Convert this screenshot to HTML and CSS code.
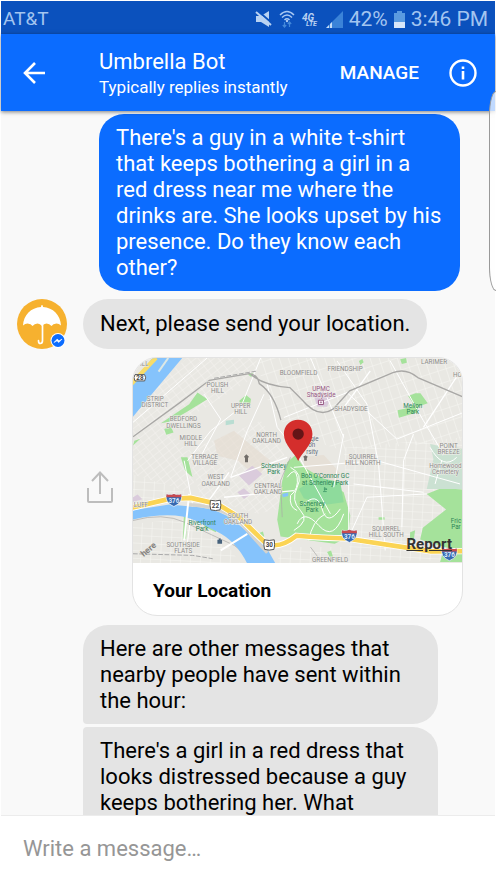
FILE: index.html
```html
<!DOCTYPE html>
<html lang="en">
<head>
<meta charset="utf-8">
<meta name="viewport" content="width=device-width, initial-scale=1">
<title>Umbrella Bot</title>
<link rel="stylesheet" href="styles.css">
</head>
<body>
<div class="screen">
  <div class="status-bar">
    <span>AT&amp;T</span>
    <div class="status-icons">
      <svg width="18" height="18" viewBox="0 0 18 18" aria-hidden="true">
        <path d="M1 6h5l8-5v16l-8-5H1z" fill="#b9d2f2"/>
        <path d="M3 1l15 13" stroke="#0b51bd" stroke-width="2"/>
        <path d="M1 2l15 13" stroke="#b9d2f2" stroke-width="2"/>
      </svg>
      <svg width="16" height="18" viewBox="0 0 16 18" fill="none" aria-hidden="true">
        <path d="M1 5q7-7 14 0M3 7.500q5-5 10 0M5.500 10q2.500-2.500 5 0" stroke="#a9c8f2" stroke-width="1.500"/>
        <circle cx="8" cy="11" r="1.200" fill="#a9c8f2"/>
        <path d="M5.500 12v5M3.800 15l1.700 2 1.700-2M10.500 17v-5M8.800 14l1.700-2 1.700 2" stroke="#4388da" stroke-width="1.200"/>
      </svg>
      <svg width="19" height="18" viewBox="0 0 19 18" aria-hidden="true">
        <text x="1" y="11" class="lte-big">4G</text>
        <text x="5" y="16" class="lte-small">LTE</text>
      </svg>
      <svg width="17" height="17" viewBox="0 0 17 17" aria-hidden="true">
        <path d="M17 0v17H0z" fill="#3b83d8"/>
        <path d="M6 11v6H4v-4zM3 14v3H0z" fill="#c4dbf7"/>
      </svg>
      <span>42%</span>
      <svg class="battery" width="11" height="17" viewBox="0 0 11 17" aria-hidden="true">
        <path d="M3 0h5v2h3v15H0V2h3z" fill="#5b9be0"/>
        <path d="M0 11h11v6H0z" fill="#d9e7f9"/>
      </svg>
      <span>3:46 PM</span>
    </div>
  </div>

  <header class="app-bar">
    <button class="icon-button" type="button" aria-label="Back">
      <svg width="24" height="24" viewBox="0 0 24 24" fill="none" stroke="#fff" stroke-width="2.600" aria-hidden="true">
        <path d="M23 12H3M13 2L3 12l10 10"/>
      </svg>
    </button>
    <div class="contact">
      <h1>Umbrella Bot</h1>
      <p>Typically replies instantly</p>
    </div>
    <button class="manage" type="button">MANAGE</button>
    <button class="icon-button" type="button" aria-label="Information">
      <svg width="28" height="28" viewBox="0 0 28 28" aria-hidden="true">
        <circle cx="14" cy="14" r="12.500" fill="none" stroke="#fff" stroke-width="2.400"/>
        <path d="M12.700 7.500h2.600v2.600h-2.600zM12.700 12h2.600v8.500h-2.600z" fill="#fff"/>
      </svg>
    </button>
  </header>

  <main class="chat">
    <p class="bubble sent">There's a guy in a white t-shirt that keeps bothering a girl in a red dress near me where the drinks are. She looks upset by his presence. Do they know each other?</p>

    <div class="received-row">
      <svg class="avatar" width="50" height="50" viewBox="0 0 50 50" role="img" aria-label="Umbrella Bot">
        <circle cx="25" cy="25" r="25" fill="#f6b12f"/>
        <path d="M25 6q1 0 1 2C36 8.500 43.500 16 44 26.500q-2-2-4.500-2-3.500 0-5 2.500-2-2.500-5-2.500-2.500 0-4.500 2.500-2-2.500-4.500-2.500-3 0-5 2.500-1.500-2.500-5-2.500-2.500 0-4.500 2C6.500 16 14 8.500 24 8q0-2 1-2z" fill="#fff"/>
        <path d="M25.500 26v15.500q0 3-2.200 3-1.800 0-1.800-2.800" fill="none" stroke="#fff" stroke-width="1.700" stroke-linecap="round"/>
        <circle cx="41" cy="41.500" r="7.500" fill="#fff"/>
        <circle cx="41" cy="41.500" r="6.500" fill="#0b6cff"/>
        <path d="M37 43.500l3.200-3.400 1.800 1.700 3-1.700-3.200 3.400-1.800-1.700z" fill="#fff" stroke="#fff" stroke-width=".6"/>
      </svg>
      <p class="bubble received">Next, please send your location.</p>
    </div>

    <div class="location-row">
      <button class="icon-button share" type="button" aria-label="Share">
        <svg width="28" height="34" viewBox="0 0 28 34" fill="none" stroke="#bdbdbd" stroke-width="2" aria-hidden="true">
          <path d="M14 24V3M6 11l8-8.500 8 8.500M2 18v13q0 1 1 1h22q1 0 1-1V18"/>
        </svg>
      </button>
      <article class="location-card">
        <div class="map">
        <svg class="map-art" viewBox="6 21 990 618" role="img" aria-label="Map of Oakland and Shadyside">
          <defs>
            <pattern id="grid-a" width="24" height="17" patternUnits="userSpaceOnUse" patternTransform="rotate(-38)">
              <path d="M0 0h24M0 0v17" stroke="#f8f7f4" stroke-width="2.400" fill="none"/>
            </pattern>
            <pattern id="grid-b" width="26" height="38" patternUnits="userSpaceOnUse" patternTransform="rotate(-18)">
              <path d="M0 0h26M0 0v38" stroke="#f8f7f4" stroke-width="3" fill="none"/>
            </pattern>
            <pattern id="grid-c" width="30" height="23" patternUnits="userSpaceOnUse" patternTransform="rotate(3)">
              <path d="M0 0h30M0 0v23" stroke="#f8f7f4" stroke-width="3" fill="none"/>
            </pattern>
            <g id="interstate">
              <path d="M-22-17q12 4 22-1 10 5 22 1 7 25-22 37-29-12-22-37z" fill="#3769b0" stroke="#fff" stroke-width="2"/>
              <path d="M-22-17q12 4 22-1 10 5 22 1l1 9h-46z" fill="#c84b50"/>
              <text y="9" class="shield">376</text>
            </g>
          </defs>
          <path d="M0 0h1010v660H0z" fill="#e9e8e3"/>
          <path d="M0 170L170 20h210l-10 60-130 80L110 240 0 330z" fill="url(#grid-a)"/>
          <path d="M380 20h620v250L640 300 480 250 400 130z" fill="url(#grid-b)"/>
          <path d="M640 290l360-30v370H660z" fill="url(#grid-c)"/>
          <path d="M0 370l160 50v25L0 460zM0 520l230-20 100 140H0zM460 590h200v60H430z" fill="url(#grid-c)"/>
          <path d="M170 300l220-90 70 90 10 170-90 20-170-50zM0 330l110-90 60 60 20 100-30 20-160-50z" fill="url(#grid-a)"/>
          <path d="M250 270l60-30 60 50-30 45-80-20zM310 320l60-30 50 40-40 50zM520 318l60-5 50 55-20 45-90-20z" fill="#e4dace" fill-opacity=".6"/>
          <path d="M325 375l40-30 30 25-40 35zM320 425l20-12 20 18-20 14zM552 140l30-22 18 24-10 26h-30zM6 440l14-8 14 14-28 8z" fill="#dacbdc"/>

          <g fill="#a5e29b">
            <path d="M175 160l25-35 30 20-65 40-50 28-25 4zM326 150l20-18 15 12-3 20-30-5zM352 71l15-5-5 12zM100 235l20-8 8 18-22 7zM150 320h20l15 60-22-20zM10 270l18-6-22 20zM686 30l10-6 4 10-10 8zM810 25l18-4 2 14-15 4zM834 135l22-8 15 0 22 30-28 10-5 18-54 16-4-23 36-8 12-10z"/>
            <path d="M455 390l15-55 25-22 25 37 85 50 35 25 20 70-7 65-40 20-163-22-10-50z"/>
            <path d="M890 430l45-18 65 5v190l-130-40 8-35 70-55z"/>
            <path d="M745 500h18v8h-18zM840 545l15-6-4 28-12 5zM590 605l12-5 6 20h-10zM160 480l9 0-3 85h-10zM380 550l17-7 4 15-14 4zM940 600l60 5v30h-70zM225 515l35 18-5 12-36-18z"/>
          </g>
          <path d="M505 415l55-35 70 15 10 60-60 8-60-20z" fill="#8edb9c"/>
          <path d="M900 280l25 5 12 30 45-25 18 5v120H890l20-90z" fill="#cbe1d2"/>
          <path d="M285 210l25-3v12l-25 4z" fill="#b9ddd2"/>
          <g fill="none" stroke="#fff" stroke-width="3">
            <path d="M470 380q25-35 30 0t-20 55q-5 35 20 45M515 465q45-45 60 10t55 0M500 520q20-45 65 5t75-35M535 570q10-60 50-80M480 350q40 20 20 60t10 70-20 60M655 390v150M900 290q40 70 80 30M915 400l20-70M0 220L230 20M390 21L330 170 240 240 170 330M410 100l30 130 50 60 110 200M400 130L350 240 300 380M220 130l50 75-75 140M460 200l190-75 150 140 200-80M540 20l100 240M620 30l90 130 35 180 20 260M780 30l100 180 60 100M160 330l25 130-15 115M490 350l250-20 250 70M670 400l210 25M660 550l50-110 180-10M850 250l-30 80-5 200M640 250l-30 160"/>
            <path d="M880 230L998 50M720 60L640 170M300 380l170-60M280 440l210-20M220 470l75-105" stroke-width="4"/>
          </g>
          <g fill="none" stroke="#a9a8a6" stroke-width="4">
            <path d="M6 258l140-102 90-68 120-20q25 3 30 30 45 30 65 110M360 70q40 35 118 40l35 35q50 60 95 30l50-55 130-55q40-15 75 15l140 60"/>
            <path d="M6 510q90-25 155 5l150 70 70 55M570 630l-30-40M455 500l-5-110 30-70" stroke-width="2"/>
          </g>
          <path d="M250 82l130-22M6 610l180 5 60 10" fill="none" stroke="#aaa" stroke-width="3" stroke-dasharray="14 5"/>

          <path d="M0 105l65-85h90L75 115 0 205z" fill="#85c3fc"/>
          <path d="M83 62L112 21" stroke="#dce8e5" stroke-width="6"/>
          <path d="M0 100L75 20" stroke="#f8dc68" stroke-width="13"/>
          <path d="M0 480l115-18 90 8q60 7 100 37l100 80 30 53h-85q-35-70-92-97l-65-33q-65-30-193-2z" fill="#85c3fc"/>
          <path d="M175 462q90 5 145 45l90 100" fill="none" stroke="#d5d3cd" stroke-width="10"/>
          <path d="M175 430l-15 140M350 550l-80 50" stroke="#fff" stroke-width="6"/>
          <path d="M0 472l115-27 65-3 80 18 65 40 80 78q40 20 93-22 80 6 150 8l255 39 95-1" fill="none" stroke="#fff" stroke-width="19"/>
          <path d="M0 472l115-27 65-3 80 18 65 40 80 78q40 20 93-22 80 6 150 8l255 39 95-1" fill="none" stroke="#fbd454" stroke-width="14"/>
          <path d="M455 430l18-4v10l-16 4z" fill="#85c3fc"/>

          <g class="place">
            <text x="40" y="46">ILL</text>
            <text x="73" y="149">STRIP</text><text x="72" y="168">DISTRICT</text>
            <text x="260" y="108">POLISH</text><text x="260" y="125">HILL</text>
            <text x="330" y="171">UPPER</text><text x="330" y="189">HILL</text>
            <text x="158" y="212">BEDFORD</text><text x="158" y="232">DWELLINGS</text>
            <text x="180" y="267">MIDDLE</text><text x="180" y="285">HILL</text>
            <text x="222" y="324">TERRACE</text><text x="222" y="342">VILLAGE</text>
            <text x="408" y="259">NORTH</text><text x="408" y="276">OAKLAND</text>
            <text x="255" y="386">WEST</text><text x="255" y="405">OAKLAND</text>
            <text x="412" y="413">CENTRAL</text><text x="412" y="431">OAKLAND</text>
            <text x="322" y="503">SOUTH</text><text x="322" y="521">OAKLAND</text>
            <text x="157" y="590">SOUTHSIDE</text><text x="157" y="608">FLATS</text>
            <text x="30" y="470">LUFF</text>
            <text x="504" y="72">BLOOMFIELD</text><text x="644" y="61">FRIENDSHIP</text>
            <text x="912" y="39">LARIMER</text><text x="982" y="78">HO</text>
            <text x="662" y="179">SHADYSIDE</text>
            <text x="698" y="325">SQUIRREL</text><text x="698" y="343">HILL NORTH</text>
            <text x="956" y="292">POINT</text><text x="956" y="310">BREEZE</text>
            <text x="768" y="541">SQUIRREL</text><text x="768" y="560">HILL SOUTH</text>
            <text x="599" y="635">GREENFIELD</text>
            <text x="946" y="353">Homewood</text><text x="946" y="371">Cemetery</text>
          </g>
          <g class="place park">
            <text x="848" y="171">Mellon</text><text x="848" y="191">Park</text>
            <text x="429" y="351">Schenley</text><text x="429" y="370">Park</text>
            <text x="584" y="383">Bob O'Connor GC</text><text x="584" y="402">at Schenley Park</text>
            <text x="545" y="465">Schenley</text><text x="545" y="484">Park</text>
            <text x="214" y="524">Riverfront</text><text x="214" y="543">Park</text>
            <text x="978" y="517">Fric</text><text x="978" y="536">Par</text>
          </g>
          <g class="place clinic"><text x="572" y="120">UPMC</text><text x="572" y="139">Shadyside</text></g>
          <g class="place school"><text x="552" y="271">gie</text><text x="544" y="290">on</text><text x="545" y="309">rsity</text></g>
          <path d="M564 148h15v13h-15z" fill="#fff" stroke="#965583" stroke-width="3"/>
          <path d="M568 154.500h7M571.500 151v7" stroke="#965583" stroke-width="2"/>
          <path d="M340 318l7-7 8 7-3 4v13h-9v-13zM518 318l7-4 7 4-3 4v8h-8v-8z" fill="#716d69"/>
          <path d="M260 568h14v12h-14zM264 564h6v5h-6z" fill="#46617b"/>
          <path d="M582 420v-9l8 5-8 2M578 423h11" fill="none" stroke="#28855b" stroke-width="2"/>
          <text class="here" transform="translate(38 620) rotate(-40)">here</text>

          <use href="#interstate" x="129" y="448"/>
          <use href="#interstate" x="657" y="556"/>
          <use href="#interstate" x="958" y="611"/>
          <g fill="#fff" stroke="#555" stroke-width="3">
            <path d="M12 71h29q6 9 0 19H12q-6-10 0-19z"/>
            <path d="M239 449q15 4 30 0 3 16-1 29-14 4-28 0-4-13-1-29zM401 568q15 4 30 0 3 16-1 29-14 4-28 0-4-13-1-29z"/>
          </g>
          <g class="route"><text x="27" y="87">28</text><text x="254" y="471">22</text><text x="416" y="590">30</text></g>
          <path d="M503 331c-8-22-43-47-43-81 0-25 19-43 43-43s43 18 43 43c0 34-35 59-43 81z" fill="#d42e2c"/>
          <circle cx="503" cy="250" r="17" fill="#641517"/>
        </svg>
        <a class="report" href="#report">Report</a>
        </div>
        <h2>Your Location</h2>
      </article>
    </div>

    <p class="bubble received group-first">Here are other messages that nearby people have sent within the hour:</p>
    <p class="bubble received group-next">There's a girl in a red dress that looks distressed because a guy keeps bothering her. What</p>
  </main>

  <form class="composer">
    <input type="text" aria-label="Write a message" placeholder="Write a message…">
  </form>
  <div class="edge-handle"></div>
</div>
</body>
</html>
```
FILE: styles.css
```css
* {
  box-sizing: border-box;
}

body,
h1,
h2,
p {
  margin: 0;
}

body {
  background: #fff;
  font-family: Roboto, "Liberation Sans", sans-serif;
  font-size: 22px;
  line-height: 26px;
  color: #000;
}

button,
input {
  padding: 0;
  border: 0;
  background: none;
  color: inherit;
  font: inherit;
}

svg {
  display: block;
}

.screen {
  position: relative;
  display: flex;
  flex-direction: column;
  height: 100vh;
  padding: 1px 1px 0;
  overflow: hidden;
}

.status-bar {
  display: flex;
  flex: none;
  align-items: center;
  justify-content: space-between;
  height: 33px;
  padding: 3px 7px 0 2px;
  background: #0b51bd;
  color: #a3c5f0;
  font-size: 19px;
}

.status-icons {
  display: flex;
  align-items: center;
  gap: 6px;
  font-size: 21px;
}

.lte-big,
.lte-small {
  fill: #b9d2f2;
  font-weight: 700;
  font-style: italic;
}

.lte-big {
  font-size: 10px;
}

.lte-small {
  font-size: 7px;
}

.app-bar {
  position: relative;
  z-index: 1;
  display: flex;
  flex: none;
  align-items: center;
  height: 77px;
  padding: 0 18px 0 21px;
  background: #0b6cff;
  color: #fff;
  box-shadow: 0 1px 4px rgba(0, 0, 0, 0.5);
}

.icon-button {
  flex: none;
  cursor: pointer;
}

.contact {
  flex: 1;
  padding-left: 53px;
}

.contact h1 {
  font-size: 22px;
  font-weight: 400;
  line-height: 28px;
}

.contact p {
  font-size: 17px;
  line-height: 22px;
}

.manage {
  margin-right: 30px;
  font-size: 19px;
  font-weight: 500;
  cursor: pointer;
}

.chat {
  display: flex;
  flex: 1;
  flex-direction: column;
  align-items: flex-start;
  min-height: 0;
  padding: 3px 16px 0;
  overflow: hidden;
  background: #f9f9f9;
}

.bubble {
  flex: none;
  padding: 11px 17px 10px;
  border-radius: 25px;
}

.sent {
  align-self: flex-end;
  max-width: 361px;
  margin-right: 19px;
  background: #0b6cff;
  color: #fff;
}

.received {
  max-width: 355px;
  background: #e4e4e4;
}

.received-row {
  display: flex;
  flex: none;
  gap: 16px;
  margin-top: 8px;
}

.received-row .bubble {
  padding: 12px 17px;
}

.location-row {
  display: flex;
  flex: none;
  align-self: stretch;
  align-items: center;
  justify-content: flex-end;
  gap: 18px;
  margin: 8px 16px 9px 0;
}

.location-card {
  flex: none;
  width: 331px;
  overflow: hidden;
  border: 1px solid #e3e3e3;
  border-radius: 25px;
  background: #fff;
}

.map {
  position: relative;
}

.map-art {
  width: 100%;
  height: auto;
}

.report {
  position: absolute;
  right: 10px;
  bottom: 6px;
  color: #333;
  font-size: 15px;
  font-weight: 700;
}

.location-card h2 {
  padding: 15px 20px 11px;
  font-size: 19px;
  font-weight: 700;
  line-height: 26px;
}

.place text {
  fill: #8c8b89;
  stroke: #efeeea;
  stroke-width: 3px;
  paint-order: stroke;
  font-size: 19px;
  text-anchor: middle;
}

.park text {
  fill: #2b8458;
  stroke: none;
}

.clinic text {
  fill: #965583;
}

.school text {
  fill: #626d78;
}

.here {
  fill: #85827e;
  font-size: 26px;
  font-weight: 700;
}

.shield,
.route {
  font-size: 19px;
  font-weight: 700;
  text-anchor: middle;
}

.shield {
  fill: #dbe8fa;
}

.route {
  fill: #444;
}

.group-first {
  margin-left: 66px;
  border-bottom-left-radius: 4px;
}

.group-next {
  margin-top: 3px;
  margin-left: 66px;
  padding-bottom: 36px;
  border-top-left-radius: 4px;
}

.composer {
  flex: none;
  padding: 20px 22px;
  border-top: 1px solid #ececec;
  background: #fff;
}

.composer input {
  display: block;
  width: 100%;
  outline: 0;
}

.composer input::placeholder {
  color: #969696;
  opacity: 1;
}

.edge-handle {
  position: absolute;
  top: 91px;
  right: 0;
  z-index: 2;
  width: 7px;
  height: 200px;
  border: 1px solid #999;
  border-right: 0;
  border-radius: 7px 0 0 7px / 24px 0 0 24px;
  background: rgba(255, 255, 255, 0.75);
}
```
